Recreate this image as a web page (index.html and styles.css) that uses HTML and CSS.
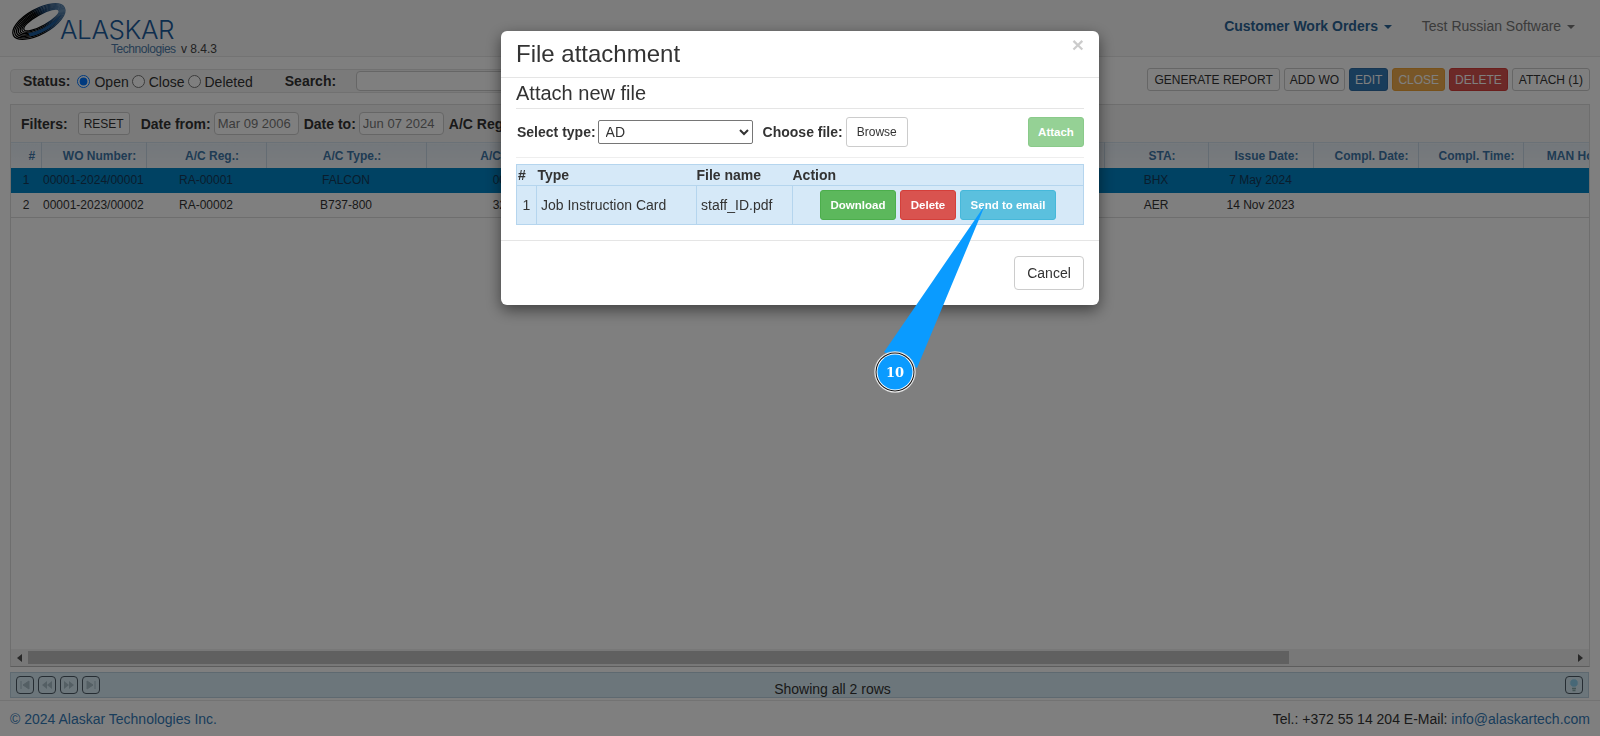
FILE: index.html
```html
<!DOCTYPE html>
<html lang="en">
<head>
    <meta charset="UTF-8">
    <title>Customer Work Orders</title>
    <link rel="stylesheet" href="styles.css">
</head>
<body>
    <!-- Top navigation -->
    <header class="navbar">
        <div class="brand">
            <svg class="brand-ring" width="56" height="34" viewBox="0 0 56 34">
                <defs>
                    <linearGradient id="ringGrad" x1="0" y1="0" x2="1" y2="0">
                        <stop offset="0.45" stop-color="#000"/>
                        <stop offset="0.65" stop-color="#123a66"/>
                        <stop offset="1" stop-color="#5a84ad"/>
                    </linearGradient>
                </defs>
                <g transform="rotate(-29 28 17)" fill="none" stroke="url(#ringGrad)" stroke-width="1.3">
                    <ellipse cx="29" cy="17" rx="29" ry="12.5"/>
                    <ellipse cx="29.5" cy="17" rx="27.5" ry="11.3"/>
                    <ellipse cx="30" cy="17" rx="26" ry="10.1"/>
                    <ellipse cx="30.5" cy="17" rx="24.5" ry="9"/>
                    <ellipse cx="31" cy="17" rx="23" ry="7.9"/>
                    <ellipse cx="31.5" cy="17" rx="21.5" ry="6.8"/>
                    <ellipse cx="32" cy="17" rx="20" ry="5.7"/>
                    <path d="M14 25.5 C25 30 43 28.5 53 21 C46 24.5 28 27 14 22 Z" fill="#1d5c9c" stroke="none"/>
                </g>
            </svg>
            <div class="brand-text">
                <div class="brand-name">ALASKAR</div>
                <div class="brand-sub"><span class="brand-tech">Technologies</span> <span class="brand-ver">v 8.4.3</span></div>
            </div>
        </div>
        <nav class="nav-links">
            <a class="nav-link active">Customer Work Orders <span class="caret"></span></a>
            <a class="nav-link">Test Russian Software <span class="caret"></span></a>
        </nav>
    </header>

    <!-- Status and actions -->
    <div class="toolbar">
        <div class="status-bar">
            <b class="status-label">Status:</b>
            <label class="radio"><input type="radio" name="status" checked>Open</label>
            <label class="radio"><input type="radio" name="status">Close</label>
            <label class="radio"><input type="radio" name="status">Deleted</label>
            <b class="search-label">Search:</b>
            <input class="search-input" type="text">
        </div>
        <div class="actions">
            <button class="btn-xs wide">GENERATE REPORT</button>
            <button class="btn-xs">ADD WO</button>
            <button class="btn-xs blue">EDIT</button>
            <button class="btn-xs orange">CLOSE</button>
            <button class="btn-xs red">DELETE</button>
            <button class="btn-xs wide">ATTACH (1)</button>
        </div>
    </div>

    <!-- Work order grid -->
    <section class="grid-panel">
        <div class="filters">
            <b class="filters-label">Filters:</b>
            <button class="btn-xs reset">RESET</button>
            <b>Date from:</b>
            <input class="date-input" type="text" value="Mar 09 2006">
            <b>Date to:</b>
            <input class="date-input" type="text" value="Jun 07 2024">
            <b>A/C Reg.:</b>
        </div>
        <div class="table-wrap">
            <table class="grid">
                <colgroup>
                    <col class="c-num"><col class="c-wo"><col class="c-reg"><col class="c-type"><col class="c-sn">
                    <col class="c-desc"><col class="c-sta"><col class="c-date"><col class="c-date"><col class="c-date"><col class="c-date">
                </colgroup>
                <thead>
                    <tr>
                        <th>#</th><th>WO Number:</th><th>A/C Reg.:</th><th>A/C Type.:</th><th>A/C Serial No.:</th>
                        <th>Description:</th><th>STA:</th><th>Issue Date:</th><th>Compl. Date:</th><th>Compl. Time:</th><th>MAN Hours:</th>
                    </tr>
                </thead>
                <tbody>
                    <tr class="selected">
                        <td>1</td><td class="left">00001-2024/00001</td><td>RA-00001</td><td>FALCON</td><td>0000001</td>
                        <td></td><td>BHX</td><td>7 May 2024</td><td></td><td></td><td></td>
                    </tr>
                    <tr>
                        <td>2</td><td class="left">00001-2023/00002</td><td>RA-00002</td><td>B737-800</td><td>3200001</td>
                        <td></td><td>AER</td><td>14 Nov 2023</td><td></td><td></td><td></td>
                    </tr>
                </tbody>
            </table>
        </div>
        <div class="hscroll">
            <span class="arrow-left"></span>
            <div class="hscroll-track"><div class="hscroll-thumb"></div></div>
            <span class="arrow-right"></span>
        </div>
    </section>

    <div class="pager">
        <div class="pager-btns">
            <button class="pager-btn"><svg width="12" height="10" viewBox="0 0 12 10"><path d="M2 1v8M10 1v8L4 5z" fill="#a9bec9" stroke="#a9bec9"/></svg></button>
            <button class="pager-btn"><svg width="12" height="10" viewBox="0 0 12 10"><path d="M6 1v8L1 5zM11 1v8L6 5z" fill="#a9bec9"/></svg></button>
            <button class="pager-btn"><svg width="12" height="10" viewBox="0 0 12 10"><path d="M1 1v8l5-4zM6 1v8l5-4z" fill="#a9bec9"/></svg></button>
            <button class="pager-btn"><svg width="12" height="10" viewBox="0 0 12 10"><path d="M10 1v8M2 1v8l6-4z" fill="#a9bec9" stroke="#a9bec9"/></svg></button>
        </div>
        <div class="pager-info">Showing all 2 rows</div>
        <button class="pager-btn"><svg width="12" height="14" viewBox="0 0 12 14"><circle cx="6" cy="5" r="4.3" fill="#8fd0ee" stroke="#d8eef8"/><path d="M4 10.5h4M4.5 12.5h3" stroke="#8aa" stroke-width="1.3"/></svg></button>
    </div>

    <footer class="footer">
        <a class="foot-link">&copy; 2024 Alaskar Technologies Inc.</a>
        <span>Tel.: +372 55 14 204 E-Mail: <a class="foot-link">info@alaskartech.com</a></span>
    </footer>

    <div class="backdrop"></div>

    <!-- File attachment dialog -->
    <div class="modal">
        <div class="modal-header">
            <span class="modal-close">&times;</span>
            <h4 class="modal-title">File attachment</h4>
        </div>
        <div class="modal-body">
            <h4 class="section-title">Attach new file</h4>
            <div class="attach-row">
                <b>Select type:</b>
                <select class="type-select"><option>AD</option></select>
                <b class="choose-label">Choose file:</b>
                <button class="btn plain browse">Browse</button>
                <button class="btn green faded attach">Attach</button>
            </div>
            <table class="files">
                <colgroup><col class="f-num"><col class="f-type"><col class="f-name"><col></colgroup>
                <thead>
                    <tr><th>#</th><th>Type</th><th class="flush">File name</th><th class="flush">Action</th></tr>
                </thead>
                <tbody>
                    <tr>
                        <td class="center">1</td>
                        <td>Job Instruction Card</td>
                        <td>staff_ID.pdf</td>
                        <td class="file-actions">
                            <button class="btn green">Download</button>
                            <button class="btn danger">Delete</button>
                            <button class="btn info">Send to email</button>
                        </td>
                    </tr>
                </tbody>
            </table>
        </div>
        <div class="modal-footer">
            <button class="btn plain cancel">Cancel</button>
        </div>
    </div>

    <!-- Step callout -->
    <svg class="callout" width="1600" height="736" viewBox="0 0 1600 736">
        <polygon points="985,205 884,352 917,368" fill="#0a9bff"/>
        <circle cx="895" cy="372" r="20.5" fill="#fff" stroke="#ccc" stroke-width=".5"/>
        <circle cx="895" cy="372" r="19.5" fill="#111"/>
        <circle cx="895" cy="372" r="18.5" fill="#fff"/>
        <circle cx="895" cy="372" r="17.5" fill="#0a9bff"/>
        <text class="callout-num" x="895" y="377" text-anchor="middle">10</text>
    </svg>
</body>
</html>
```

FILE: styles.css
```css
/* General Styles */
body {
    margin: 0;
    height: 100vh;
    overflow: hidden;
    display: flex;
    flex-direction: column;
    font-family: 'Liberation Sans', Arial, sans-serif;
    font-size: 14px;
    color: #333;
    background-color: #fff;
}

/* Navbar */
.navbar {
    height: 56px;
    flex: none;
    display: flex;
    justify-content: space-between;
    background-color: #f8f8f8;
    border-bottom: 1px solid #e7e7e7;
}

.brand {
    display: flex;
    padding: 5px 0 0 10px;
}

.brand-ring {
    flex: none;
    overflow: visible;
}

.brand-text {
    margin-left: -6px;
    padding-top: 11px;
}

.brand-name {
    font-family: Inter, 'Liberation Sans', sans-serif;
    font-size: 26px;
    font-weight: 300;
    line-height: 27px;
    letter-spacing: -0.4px;
    color: #1d5c9c;
}

.brand-sub {
    padding-left: 51px;
    font-size: 12px;
    line-height: 13px;
    white-space: nowrap;
}

.brand-tech {
    color: #4d7ba8;
    letter-spacing: -.45px;
}

.brand-ver {
    margin-left: 2px;
    color: #444;
}

.nav-links {
    display: flex;
    gap: 30px;
    padding: 18px 25px 0 0;
}

.nav-link {
    color: #777;
}

.nav-link.active {
    font-weight: bold;
    color: #2a6496;
}

.caret {
    display: inline-block;
    margin-left: 2px;
    vertical-align: middle;
    border-top: 4px solid;
    border-left: 4px solid transparent;
    border-right: 4px solid transparent;
}

/* Toolbar */
.toolbar {
    flex: none;
    display: flex;
    justify-content: space-between;
    margin: 11px 10px 11px;
    height: 25px;
}

.status-bar {
    width: 1080px;
    height: 24px;
    margin-top: 1px;
    box-sizing: border-box;
    display: flex;
    align-items: center;
    padding-left: 12px;
    background-color: #f5f5f5;
    border: 1px solid #e3e3e3;
    border-radius: 4px;
}

.status-label {
    margin-right: 7px;
}

.radio {
    display: flex;
    align-items: center;
    margin-right: 3px;
    padding-top: 2px;
}

.radio input {
    margin: 0 4px 2px 0;
}

.search-label {
    margin-left: 29px;
}

.search-input {
    width: 400px;
    height: 18px;
    margin-left: 20px;
    padding: 0;
    border: 1px solid #ccc;
    border-radius: 4px;
    background-color: #fff;
}

.actions {
    display: flex;
    gap: 4px;
}

.btn-xs {
    height: 23px;
    padding: 0 5px;
    font-family: inherit;
    font-size: 12px;
    color: #333;
    background-color: #fff;
    border: 1px solid #ccc;
    border-radius: 3px;
}

.btn-xs.wide {
    padding: 0 6px;
}

.btn-xs.blue {
    color: #fff;
    background-color: #337ab7;
    border-color: #2e6da4;
}

.btn-xs.orange {
    color: #fff;
    background-color: #f0ad4e;
    border-color: #eea236;
}

.btn-xs.red {
    color: #fff;
    background-color: #d9534f;
    border-color: #d43f3a;
}

/* Grid panel */
.grid-panel {
    flex: 1;
    min-height: 0;
    display: flex;
    flex-direction: column;
    margin: 0 10px;
    overflow: hidden;
    border: 1px solid #ddd;
    border-bottom-color: #bbb;
}

.filters {
    flex: none;
    height: 37px;
    display: flex;
    align-items: center;
    gap: 3px;
    padding-left: 10px;
    background-color: #f5f5f5;
}

.filters-label {
    margin-right: 7px;
}

.btn-xs.reset {
    margin-right: 8px;
}

.date-input {
    width: 85px;
    height: 23px;
    margin-right: 2px;
    box-sizing: border-box;
    padding: 0 3px;
    font-family: inherit;
    font-size: 13px;
    color: #777;
    background-color: #fff;
    border: 1px solid #ccc;
    border-radius: 4px;
}

.table-wrap {
    flex: 1;
    min-height: 0;
    overflow: hidden;
}

.grid {
    width: 1617px;
    table-layout: fixed;
    border-collapse: collapse;
    font-size: 12px;
}

.c-num { width: 30px; }
.c-wo { width: 105px; }
.c-reg { width: 120px; }
.c-type { width: 160px; }
.c-sn { width: 180px; }
.c-desc { width: 498px; }
.c-sta { width: 104px; }
.c-date { width: 105px; }

.grid th {
    height: 25px;
    padding: 0 2px 0 14px;
    white-space: nowrap;
    color: #3f77a8;
    background: linear-gradient(#e6eff7, #f3f7fb);
    border-top: 1px solid #d5e3ee;
    border-right: 1px solid #c9d9e6;
}

.grid td {
    height: 24px;
    padding: 0 3px;
    text-align: center;
    white-space: nowrap;
    border-bottom: 1px solid #ddd;
}

.grid td.left {
    padding-left: 2px;
    text-align: left;
}

.grid .selected td {
    background-color: #0084c6;
    border-bottom-color: #0084c6;
    color: #153a5a;
}

.hscroll {
    flex: none;
    height: 17px;
    display: flex;
    align-items: center;
    background-color: #f1f1f1;
}

.arrow-left, .arrow-right {
    width: 17px;
    flex: none;
    display: flex;
    justify-content: center;
}

.arrow-left::before {
    content: "";
    border-right: 5px solid #505050;
    border-top: 4px solid transparent;
    border-bottom: 4px solid transparent;
}

.arrow-right::before {
    content: "";
    border-left: 5px solid #505050;
    border-top: 4px solid transparent;
    border-bottom: 4px solid transparent;
}

.hscroll-track {
    flex: 1;
}

.hscroll-thumb {
    width: 1261px;
    height: 13px;
    background-color: #c1c1c1;
}

/* Pager */
.pager {
    flex: none;
    height: 26px;
    margin: 5px 11px 0 10px;
    display: flex;
    align-items: center;
    padding: 0 5px;
    box-sizing: border-box;
    background-color: #d9edf7;
    border: 1px solid #bcd3e0;
}

.pager-btns {
    display: flex;
    gap: 4px;
}

.pager-btn {
    width: 18px;
    height: 18px;
    padding: 0;
    display: flex;
    align-items: center;
    justify-content: center;
    background: transparent;
    border: 1px solid #4d5b66;
    border-radius: 4px;
}

.pager-info {
    flex: 1;
    padding-top: 8px;
    text-align: center;
}

/* Footer */
.footer {
    flex: none;
    height: 35px;
    margin-top: 2px;
    padding: 0 10px;
    display: flex;
    justify-content: space-between;
    align-items: center;
    border-top: 1px solid #e7e7e7;
}

.foot-link {
    color: #337ab7;
}

/* Dialog */
.backdrop {
    position: fixed;
    inset: 0;
    background-color: rgba(0, 0, 0, 0.5);
}

.modal {
    position: fixed;
    left: 501px;
    top: 31px;
    width: 598px;
    height: 274px;
    box-sizing: border-box;
    background-color: #fff;
    border-radius: 6px;
    box-shadow: 0 5px 15px rgba(0, 0, 0, 0.5);
}

.modal-header {
    height: 46px;
    padding: 0 15px;
    border-bottom: 1px solid #e5e5e5;
}

.modal-close {
    float: right;
    margin-top: 2px;
    font-size: 21px;
    font-weight: bold;
    color: #000;
    opacity: 0.2;
}

.modal-title {
    margin: 0;
    font-size: 24px;
    font-weight: normal;
    line-height: 46px;
}

.modal-body {
    height: 162px;
    box-sizing: border-box;
    padding: 0 15px;
}

.section-title {
    margin: 0;
    height: 30px;
    font-size: 20px;
    font-weight: normal;
    line-height: 30px;
    border-bottom: 1px solid #e5e5e5;
}

.attach-row {
    height: 49px;
    box-sizing: border-box;
    display: flex;
    align-items: center;
    padding: 0 0 3px 1px;
    border-bottom: 1px solid #eee;
}

.type-select {
    width: 155px;
    height: 24px;
    margin-left: 2px;
    padding-left: 3px;
    font-family: inherit;
    font-size: 14px;
    color: #333;
    background-color: #fff;
    border: 1px solid #767676;
    border-radius: 2px;
}

.choose-label {
    margin-left: 10px;
}

.btn {
    height: 30px;
    padding: 0 10px;
    font-family: inherit;
    font-size: 12px;
    color: #fff;
    border: 1px solid transparent;
    border-radius: 3px;
}

.btn.plain {
    color: #333;
    background-color: #fff;
    border-color: #ccc;
}

.btn.browse {
    width: 62px;
    margin-left: 3px;
    padding: 0;
}

.btn.green {
    font-size: 11.5px;
    font-weight: bold;
    background-color: #5cb85c;
    border-color: #4cae4c;
}

.btn.danger {
    font-size: 11.5px;
    font-weight: bold;
    background-color: #d9534f;
    border-color: #d43f3a;
}

.btn.info {
    font-size: 11.5px;
    font-weight: bold;
    background-color: #5bc0de;
    border-color: #46b8da;
}

.btn.faded {
    opacity: 0.65;
}

.btn.attach {
    width: 56px;
    margin-left: auto;
    padding: 0;
}

.files {
    width: 568px;
    margin-top: 6px;
    table-layout: fixed;
    border-collapse: collapse;
    background-color: #d6e9f8;
    border: 1px solid #b5d5ee;
}

.f-num { width: 20px; }
.f-type { width: 160px; }
.f-name { width: 96px; }

.files th {
    height: 20px;
    padding: 0 1px;
    text-align: left;
    border-bottom: 1px solid #b5d5ee;
}

.files th.flush {
    padding-left: 0;
}

.files td {
    height: 38px;
    padding: 0 4px;
    border-right: 1px solid #b5d5ee;
}

.files td.center {
    text-align: center;
}

.files td.file-actions {
    padding: 0 0 0 27px;
    white-space: nowrap;
    font-size: 0;
    border-right: none;
}

.file-actions .btn {
    margin-right: 4px;
}

.file-actions .btn.green { width: 76px; padding: 0; }
.file-actions .btn.danger { width: 56px; padding: 0; }
.file-actions .btn.info { width: 96px; padding: 0; }

.modal-footer {
    display: flex;
    justify-content: flex-end;
    padding: 15px;
    border-top: 1px solid #e5e5e5;
}

.btn.cancel {
    width: 70px;
    height: 34px;
    padding: 0;
    font-size: 14px;
    border-radius: 4px;
}

/* Callout */
.callout {
    position: fixed;
    left: 0;
    top: 0;
}

.callout-num {
    font-family: 'DejaVu Serif', serif;
    font-size: 13px;
    font-weight: bold;
    fill: #fff;
}
```
